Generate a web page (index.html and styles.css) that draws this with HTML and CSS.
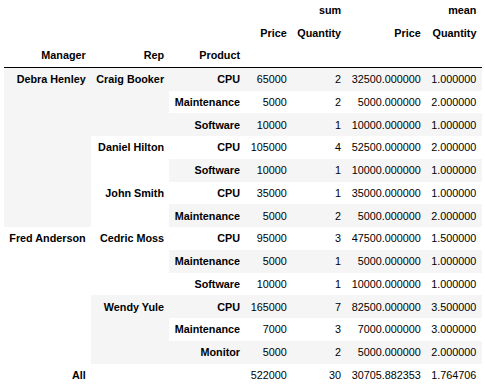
FILE: index.html
```html
<!DOCTYPE html>
<html>
<head>
<meta charset="utf-8">
<link rel="stylesheet" href="styles.css">
</head>
<body>
<table class="dataframe">
  <thead>
    <tr>
      <th></th><th></th><th></th>
      <th colspan="2">sum</th>
      <th colspan="2">mean</th>
    </tr>
    <tr>
      <th></th><th></th><th></th>
      <th>Price</th><th>Quantity</th><th>Price</th><th>Quantity</th>
    </tr>
    <tr>
      <th>Manager</th><th>Rep</th><th>Product</th>
      <th></th><th></th><th></th><th></th>
    </tr>
  </thead>
  <tbody>
    <tr>
      <th rowspan="7" class="top">Debra Henley</th>
      <th rowspan="3" class="top">Craig Booker</th>
      <th>CPU</th><td>65000</td><td>2</td><td>32500.000000</td><td>1.000000</td>
    </tr>
    <tr>
      <th>Maintenance</th><td>5000</td><td>2</td><td>5000.000000</td><td>2.000000</td>
    </tr>
    <tr>
      <th>Software</th><td>10000</td><td>1</td><td>10000.000000</td><td>1.000000</td>
    </tr>
    <tr>
      <th rowspan="2" class="top">Daniel Hilton</th>
      <th>CPU</th><td>105000</td><td>4</td><td>52500.000000</td><td>2.000000</td>
    </tr>
    <tr>
      <th>Software</th><td>10000</td><td>1</td><td>10000.000000</td><td>1.000000</td>
    </tr>
    <tr>
      <th rowspan="2" class="top">John Smith</th>
      <th>CPU</th><td>35000</td><td>1</td><td>35000.000000</td><td>1.000000</td>
    </tr>
    <tr>
      <th>Maintenance</th><td>5000</td><td>2</td><td>5000.000000</td><td>2.000000</td>
    </tr>
    <tr>
      <th rowspan="6" class="top">Fred Anderson</th>
      <th rowspan="3" class="top">Cedric Moss</th>
      <th>CPU</th><td>95000</td><td>3</td><td>47500.000000</td><td>1.500000</td>
    </tr>
    <tr>
      <th>Maintenance</th><td>5000</td><td>1</td><td>5000.000000</td><td>1.000000</td>
    </tr>
    <tr>
      <th>Software</th><td>10000</td><td>1</td><td>10000.000000</td><td>1.000000</td>
    </tr>
    <tr>
      <th rowspan="3" class="top">Wendy Yule</th>
      <th>CPU</th><td>165000</td><td>7</td><td>82500.000000</td><td>3.500000</td>
    </tr>
    <tr>
      <th>Maintenance</th><td>7000</td><td>3</td><td>7000.000000</td><td>3.000000</td>
    </tr>
    <tr>
      <th>Monitor</th><td>5000</td><td>2</td><td>5000.000000</td><td>2.000000</td>
    </tr>
    <tr>
      <th>All</th><th></th><th></th>
      <td>522000</td><td>30</td><td>30705.882353</td><td>1.764706</td>
    </tr>
  </tbody>
</table>
</body>
</html>
```

FILE: styles.css
```css
html, body {
  margin: 0;
  padding: 0;
  background: #ffffff;
}

body {
  padding-left: 4px;
  font-family: "Liberation Sans", Arial, Helvetica, sans-serif;
  font-size: 10.8px;
  color: #000000;
}

.dataframe {
  border-collapse: collapse;
  border-spacing: 0;
  border: none;
  margin-top: -1.3px;
  color: #000000;
  font-size: 10.8px;
  table-layout: auto;
}

.dataframe thead {
  border-bottom: 1px solid #000000;
  vertical-align: bottom;
}

.dataframe th,
.dataframe td {
  text-align: right;
  vertical-align: middle;
  padding: 5.18px 5.3px;
  line-height: 12.4px;
  white-space: nowrap;
  border: none;
}

.dataframe th {
  font-weight: bold;
}

.dataframe td {
  font-weight: normal;
}

.dataframe th.top {
  vertical-align: top;
}

.dataframe tbody tr:nth-child(odd) {
  background: #f5f5f5;
}
```
